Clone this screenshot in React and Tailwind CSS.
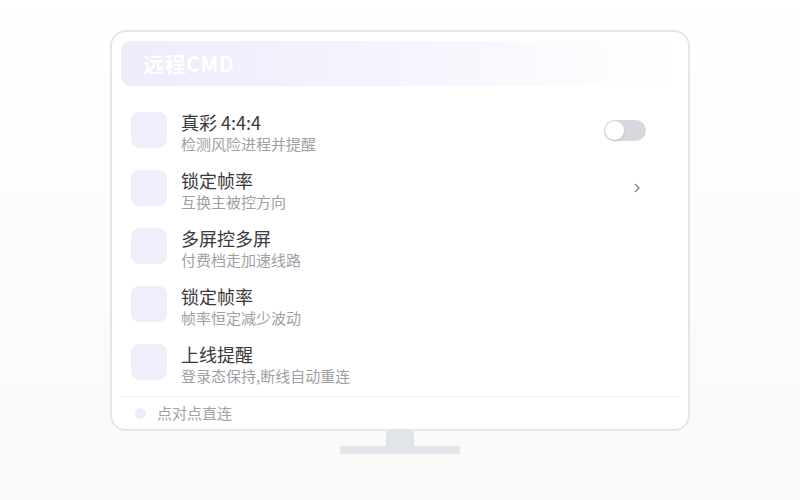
import { useState } from 'react'

const rows = [
  { title: '真彩 4:4:4', desc: '检测风险进程并提醒', action: 'toggle' },
  { title: '锁定帧率', desc: '互换主被控方向', action: 'chevron' },
  { title: '多屏控多屏', desc: '付费档走加速线路' },
  { title: '锁定帧率', desc: '帧率恒定减少波动' },
  { title: '上线提醒', desc: '登录态保持,断线自动重连' },
]

function Toggle() {
  const [on, setOn] = useState(false)
  return (
    <button
      type="button"
      onClick={() => setOn(!on)}
      className={`flex items-center w-[42px] h-[21px] rounded-full p-[1px] mr-[33px] ${
        on ? 'bg-[#8b7cf6] justify-end' : 'bg-[#d6d8de] justify-start'
      }`}
    >
      <span className="w-[19px] h-[19px] rounded-full bg-white shadow-sm" />
    </button>
  )
}

export default function App() {
  return (
    <div
      className="w-[800px] h-[500px] flex flex-col items-center pt-[30px] bg-gradient-to-b from-white to-[#f9f9fa]"
      style={{ fontFamily: '"Noto Sans CJK SC", "Noto Sans", sans-serif' }}
    >
      {/* screen */}
      <div className="w-[580px] h-[401px] rounded-[16px] border-2 border-[#e4e6eb] bg-white px-[9px] pt-[9px] flex flex-col">
        <div className="h-[45px] rounded-[10px] bg-gradient-to-r from-[#efebfc] via-[#f6f4fd] to-white flex items-center pl-[22px] pr-[18px]">
          <span className="text-[21px] font-bold text-white tracking-[0.5px]">远程CMD</span>
          <div className="ml-auto flex gap-[14px]">
            <span className="w-[5px] h-[5px] rounded-full bg-white" />
            <span className="w-[5px] h-[5px] rounded-full bg-white" />
            <span className="w-[5px] h-[5px] rounded-full bg-white" />
          </div>
        </div>

        {/* settings list */}
        <div className="mt-[15px] flex flex-col">
          {rows.map((r, i) => (
            <div key={i} className="h-[58px] flex items-center pl-[10px]">
              <div className="w-[36px] h-[36px] rounded-[8px] bg-[#f1eefc] shrink-0" />
              <div className="ml-[14px] pt-1 flex flex-col">
                <span className="text-[18px] leading-[24px] text-[#3a3a3d]">{r.title}</span>
                <span className="text-[15px] leading-[20px] text-[#9ea0a6]">{r.desc}</span>
              </div>
              {r.action === 'toggle' && (
                <div className="ml-auto">
                  <Toggle />
                </div>
              )}
              {r.action === 'chevron' && (
                <svg
                  className="ml-auto mr-[39px]"
                  width="6"
                  height="10"
                  viewBox="0 0 6 10"
                  fill="none"
                  stroke="#7b7f88"
                  strokeWidth="1.3"
                >
                  <path d="M1 1l4 4-4 4" />
                </svg>
              )}
            </div>
          ))}
        </div>

        {/* footer */}
        <div className="mt-[5px] border-t border-[#eef0f3] flex-1 flex items-center pl-[14px]">
          <span className="w-[11px] h-[11px] rounded-full bg-[#eeebfc]" />
          <span className="ml-[11px] text-[15px] text-[#a0a2a8]">点对点直连</span>
        </div>
      </div>

      {/* stand */}
      <div className="w-[28px] h-[15px] bg-[#e1e4e9]" />
      <div className="w-[120px] h-[8px] bg-[#e1e4e9]" />
    </div>
  )
}
